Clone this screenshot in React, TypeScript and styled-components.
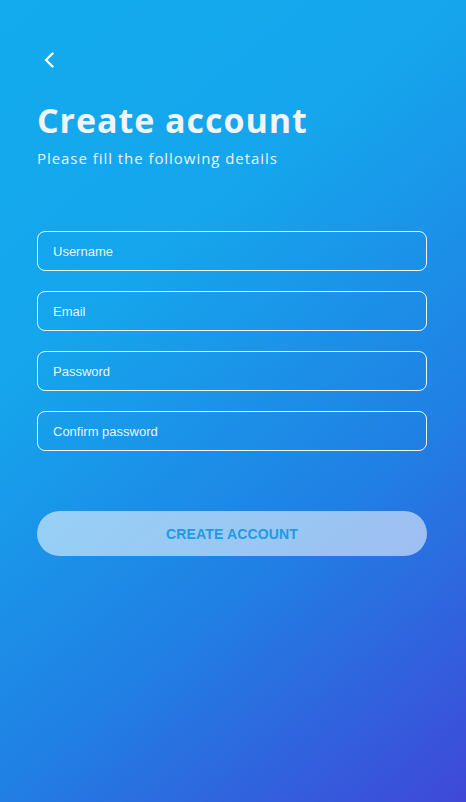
import React from "react";
import styled, { createGlobalStyle } from "styled-components";

const Global = createGlobalStyle`
  html, body { margin: 0; padding: 0; }
  body { font-family: "Liberation Sans", Arial, sans-serif; }
  * { box-sizing: border-box; }
`;

const Screen = styled.div`
  width: 466px;
  min-height: 802px;
  padding: 0 39px 0 37px;
  background: linear-gradient(140deg, #13abee 0%, #15a5ec 33%, #2080e4 66%, #3f48d8 100%);
  display: flex;
  flex-direction: column;
`;

const BackButton = styled.button`
  align-self: flex-start;
  margin: 52px 0 0 7px;
  padding: 0;
  border: 0;
  background: transparent;
  width: 10px;
  height: 16px;
  display: flex;
  cursor: pointer;
`;

const Title = styled.h1`
  margin: 32px 0 0;
  font-family: "Open Sans", sans-serif;
  font-weight: 700;
  font-size: 34px;
  line-height: 40px;
  color: #f2f4f8;
  letter-spacing: 0.95px;
`;

const Subtitle = styled.p`
  margin: 8px 0 0;
  font-family: "Open Sans", sans-serif;
  font-weight: 400;
  font-size: 15px;
  line-height: 20px;
  color: #eef3fa;
  letter-spacing: 0.95px;
`;

const Form = styled.form`
  margin-top: 63px;
  display: flex;
  flex-direction: column;
  gap: 20px;
`;

const Field = styled.input`
  width: 100%;
  height: 40px;
  border: 1px solid rgba(255, 255, 255, 0.92);
  border-radius: 8px;
  background: transparent;
  padding: 0 15px;
  font-family: "Liberation Sans", Arial, sans-serif;
  font-size: 13px;
  color: #fff;
  outline: none;
  &::placeholder {
    color: rgba(255, 255, 255, 0.92);
  }
`;

const SubmitButton = styled.button`
  margin-top: 60px;
  width: 100%;
  height: 45px;
  border: 0;
  border-radius: 23px;
  background: rgba(255, 255, 255, 0.55);
  color: #1c9be6;
  font-family: "Liberation Sans", Arial, sans-serif;
  font-weight: 700;
  font-size: 14px;
  letter-spacing: 0.15px;
  cursor: pointer;
`;

export default function App() {
  return (
    <>
      <Global />
      <Screen>
        <BackButton aria-label="Back">
          <svg width="10" height="16" viewBox="0 0 10 16" fill="none">
            <path d="M8.5 1.5 L2 8 L8.5 14.5" stroke="#fff" strokeWidth="2.4" strokeLinecap="round" strokeLinejoin="round" />
          </svg>
        </BackButton>
        <Title>Create account</Title>
        <Subtitle>Please fill the following details</Subtitle>
        <Form onSubmit={(e) => e.preventDefault()}>
          <Field type="text" placeholder="Username" />
          <Field type="email" placeholder="Email" />
          <Field type="password" placeholder="Password" />
          <Field type="password" placeholder="Confirm password" />
        </Form>
        <SubmitButton type="button">CREATE ACCOUNT</SubmitButton>
      </Screen>
    </>
  );
}
